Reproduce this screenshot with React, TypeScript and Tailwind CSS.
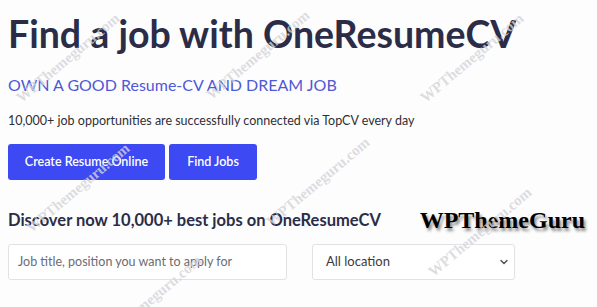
import { ChevronDown } from "lucide-react";

const MARKS = [
  { x: 68, y: 58 },
  { x: 258, y: 55 },
  { x: 472, y: 58 },
  { x: 78, y: 188 },
  { x: 318, y: 182 },
  { x: 480, y: 232 },
  { x: 150, y: 300 },
];

function Watermarks() {
  return (
    <div className="pointer-events-none absolute inset-0 overflow-hidden">
      {MARKS.map((m, i) => (
        <span
          key={i}
          className="absolute -translate-x-1/2 -translate-y-1/2 -rotate-[40deg] whitespace-nowrap font-['Liberation_Serif',serif] text-[15px] font-bold text-[#d4d4d8]/80"
          style={{ left: m.x, top: m.y }}
        >
          WPThemeguru.com
        </span>
      ))}
    </div>
  );
}

export default function App() {
  return (
    <div className="relative h-[307px] w-[597px] overflow-hidden bg-[#fdfdfd] font-['Lato',sans-serif]">
      <div className="px-2 pt-[11px]">
        <h1 className="whitespace-nowrap text-[37.5px] leading-[46px] font-bold text-[#2b2d48]">
          Find a job with OneResumeCV
        </h1>
        <p className="mt-[18px] text-[16px] leading-5 text-[#4f58d6]">OWN A GOOD Resume-CV AND DREAM JOB</p>
        <p className="mt-[18px] text-[12.5px] leading-4 text-[#2f2f35]">
          10,000+ job opportunities are successfully connected via TopCV every day
        </p>
        <div className="mt-[15px] flex gap-1">
          <button className="h-9 w-[157px] rounded-[3px] bg-[#3d49f2] text-[12.5px] font-semibold text-white">
            Create Resume Online
          </button>
          <button className="h-9 w-[88px] rounded-[3px] bg-[#3d49f2] text-[12.5px] font-semibold text-white">
            Find Jobs
          </button>
        </div>
        <div className="mt-[28px] flex h-6 items-center">
          <h2 className="text-[16.5px] leading-6 font-bold text-[#2b2d48]">
            Discover now 10,000+ best jobs on OneResumeCV
          </h2>
          <span className="ml-auto mr-[4px] font-['Liberation_Serif',serif] text-[24px] leading-6 font-bold text-black [text-shadow:2px_3px_3px_rgba(0,0,0,0.45)]">
            WPThemeGuru
          </span>
        </div>
        <div className="mt-[12px] flex gap-[25px]">
          <div className="flex h-9 w-[279px] items-center rounded-[3px] border border-[#e2e2e6] bg-white px-[9px] text-[12.5px] text-[#6b6b73]">
            Job title, position you want to apply for
          </div>
          <div className="flex h-9 w-[203px] items-center rounded-[3px] border border-[#e2e2e6] bg-white pl-[13px] pr-[4px] text-[13px] text-[#3a3a40]">
            All location
            <ChevronDown className="ml-auto h-3 w-3 text-[#555]" strokeWidth={3} />
          </div>
        </div>
      </div>
      <Watermarks />
    </div>
  );
}
